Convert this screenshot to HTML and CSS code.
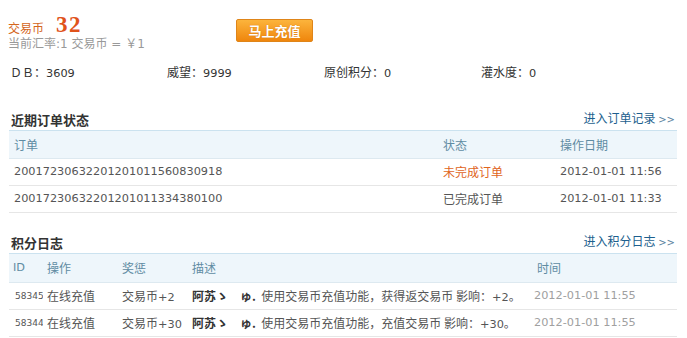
FILE: index.html
```html
<!DOCTYPE html>
<html lang="zh-CN">
<head>
<meta charset="utf-8">
<title>交易币</title>
<link rel="stylesheet" href="styles.css">
</head>
<body>
<div class="page">
  <div class="top">
    <div class="coin">
      <div class="coin-line"><span class="coin-label">交易币</span><span class="coin-num">32</span></div>
      <div class="rate">当前汇率:1 交易币 = ￥1</div>
    </div>
    <a class="btn" href="#">马上充值</a>
  </div>

  <div class="stats">
    <div class="stat">ＤＢ：<span class="n">3609</span></div>
    <div class="stat">威望：<span class="n">9999</span></div>
    <div class="stat">原创积分：<span class="n">0</span></div>
    <div class="stat">灌水度：<span class="n">0</span></div>
  </div>

  <section class="block">
    <div class="block-head">
      <h3 class="block-title">近期订单状态</h3>
      <a class="more" href="#">进入订单记录 <span class="arr">&gt;&gt;</span></a>
    </div>
    <table class="grid orders">
      <colgroup><col class="c-order"><col class="c-state"><col class="c-date"></colgroup>
      <thead>
        <tr><th>订单</th><th>状态</th><th>操作日期</th></tr>
      </thead>
      <tbody>
        <tr><td class="n">20017230632201201011560830918</td><td class="pending">未完成订单</td><td class="n">2012-01-01 11:56</td></tr>
        <tr><td class="n">20017230632201201011334380100</td><td>已完成订单</td><td class="n">2012-01-01 11:33</td></tr>
      </tbody>
    </table>
  </section>

  <section class="block block-log">
    <div class="block-head">
      <h3 class="block-title">积分日志</h3>
      <a class="more" href="#">进入积分日志 <span class="arr">&gt;&gt;</span></a>
    </div>
    <table class="grid log">
      <colgroup><col class="c-id"><col class="c-op"><col class="c-rw"><col class="c-desc"><col class="c-time"></colgroup>
      <thead>
        <tr><th class="n">ID</th><th>操作</th><th>奖惩</th><th>描述</th><th>时间</th></tr>
      </thead>
      <tbody>
        <tr><td class="id">58345</td><td>在线充值</td><td>交易币<span class="n">+2</span></td><td class="desc"><b class="nick">阿苏ゝ　ゅ.</b>&nbsp; 使用交易币充值功能，获得返交易币 影响：<span class="n">+2</span>。</td><td class="n time">2012-01-01 11:55</td></tr>
        <tr><td class="id">58344</td><td>在线充值</td><td>交易币<span class="n">+30</span></td><td class="desc"><b class="nick">阿苏ゝ　ゅ.</b>&nbsp; 使用交易币充值功能，充值交易币 影响：<span class="n">+30</span>。</td><td class="n time">2012-01-01 11:55</td></tr>
      </tbody>
    </table>
  </section>
</div>
</body>
</html>
```

FILE: styles.css
```css
html, body {
  margin: 0;
  padding: 0;
  background: #fff;
}

body {
  font-family: "Noto Sans CJK SC", "DejaVu Sans", sans-serif;
  font-size: 12px;
  color: #333;
}

.n {
  font-family: "DejaVu Sans", "Noto Sans CJK SC", sans-serif;
  font-size: 11.3px;
}

span.n {
  line-height: 1;
}

.page {
  width: 669px;
  padding: 11px 8px 0 8px;
}

.top {
  display: flex;
  align-items: flex-start;
}

.coin {
  width: 228px;
}

.coin-line {
  display: flex;
  align-items: flex-end;
  height: 26px;
}

.coin-label {
  color: #d4661c;
  line-height: 14px;
  margin-bottom: 2px;
}

.coin-num {
  font-family: "Liberation Serif", serif;
  font-weight: bold;
  font-size: 23px;
  letter-spacing: 1.5px;
  line-height: 22px;
  margin-bottom: 1px;
  color: #e0531b;
  margin-left: 12px;
}

.rate {
  font-family: "DejaVu Sans", "Noto Sans CJK SC", sans-serif;
  line-height: 14px;
  color: #999;
}

.btn {
  margin-top: 8px;
  display: block;
  width: 75px;
  height: 21px;
  line-height: 21px;
  border: 1px solid #df8519;
  border-radius: 2px;
  background: linear-gradient(#fcb43c, #ef860d);
  color: #fff;
  font-size: 13px;
  font-weight: bold;
  text-align: center;
  text-decoration: none;
  text-shadow: 0 0 1px #c96a05;
}

.stats {
  display: flex;
  margin-top: 14px;
  padding-left: 2px;
  height: 14px;
  line-height: 14px;
}

.stat {
  width: 157px;
}

.block {
  margin-top: 31px;
  padding-left: 1px;
}

.block-log {
  margin-top: 20px;
}

.block-head {
  display: flex;
  justify-content: space-between;
  align-items: center;
  height: 20px;
  padding: 0 2px 0 2px;
}

.block-title {
  margin: 0;
  font-size: 13px;
  font-weight: bold;
  color: #333;
  line-height: 20px;
}

.more {
  color: #1d5f8e;
  text-decoration: none;
  line-height: 14px;
  margin-top: -2px;
}

.more .arr {
  font-family: "DejaVu Sans", sans-serif;
  font-size: 10px;
  color: #5b83a0;
}

.grid {
  width: 668px;
  table-layout: fixed;
  border-collapse: separate;
  border-spacing: 0;
}

.grid th {
  font-weight: normal;
  text-align: left;
  color: #5f8ca3;
  background: #eef6fb;
  border-top: 1px solid #cbe2ef;
  border-bottom: 1px solid #dde9f0;
  height: 27px;
  line-height: 27px;
  padding: 0 0 0 5px;
  white-space: nowrap;
}

.grid td {
  color: #555;
  height: 26px;
  line-height: 26px;
  padding: 0 0 0 5px;
  border-bottom: 1px solid #e6e6e6;
  white-space: nowrap;
  overflow: hidden;
}

.orders .c-order { width: 429px; }
.orders .c-state { width: 117px; }
.orders .c-date { width: 122px; }

.log th, .log td { padding-left: 4px; }
.log th { height: 28px; line-height: 28px; }

.log .c-id { width: 34px; }
.log .c-op { width: 75px; }
.log .c-rw { width: 70px; }
.log .c-desc { width: 345px; }
.log .c-time { width: 144px; }

.grid td.pending {
  color: #e0641c;
}

.log td.id {
  font-family: "DejaVu Sans", sans-serif;
  font-size: 9px;
  padding-left: 6px;
}

.log td.time {
  color: #a0a0a0;
  padding-left: 1px;
}

.nick {
  color: #333;
  font-weight: bold;
}
```
